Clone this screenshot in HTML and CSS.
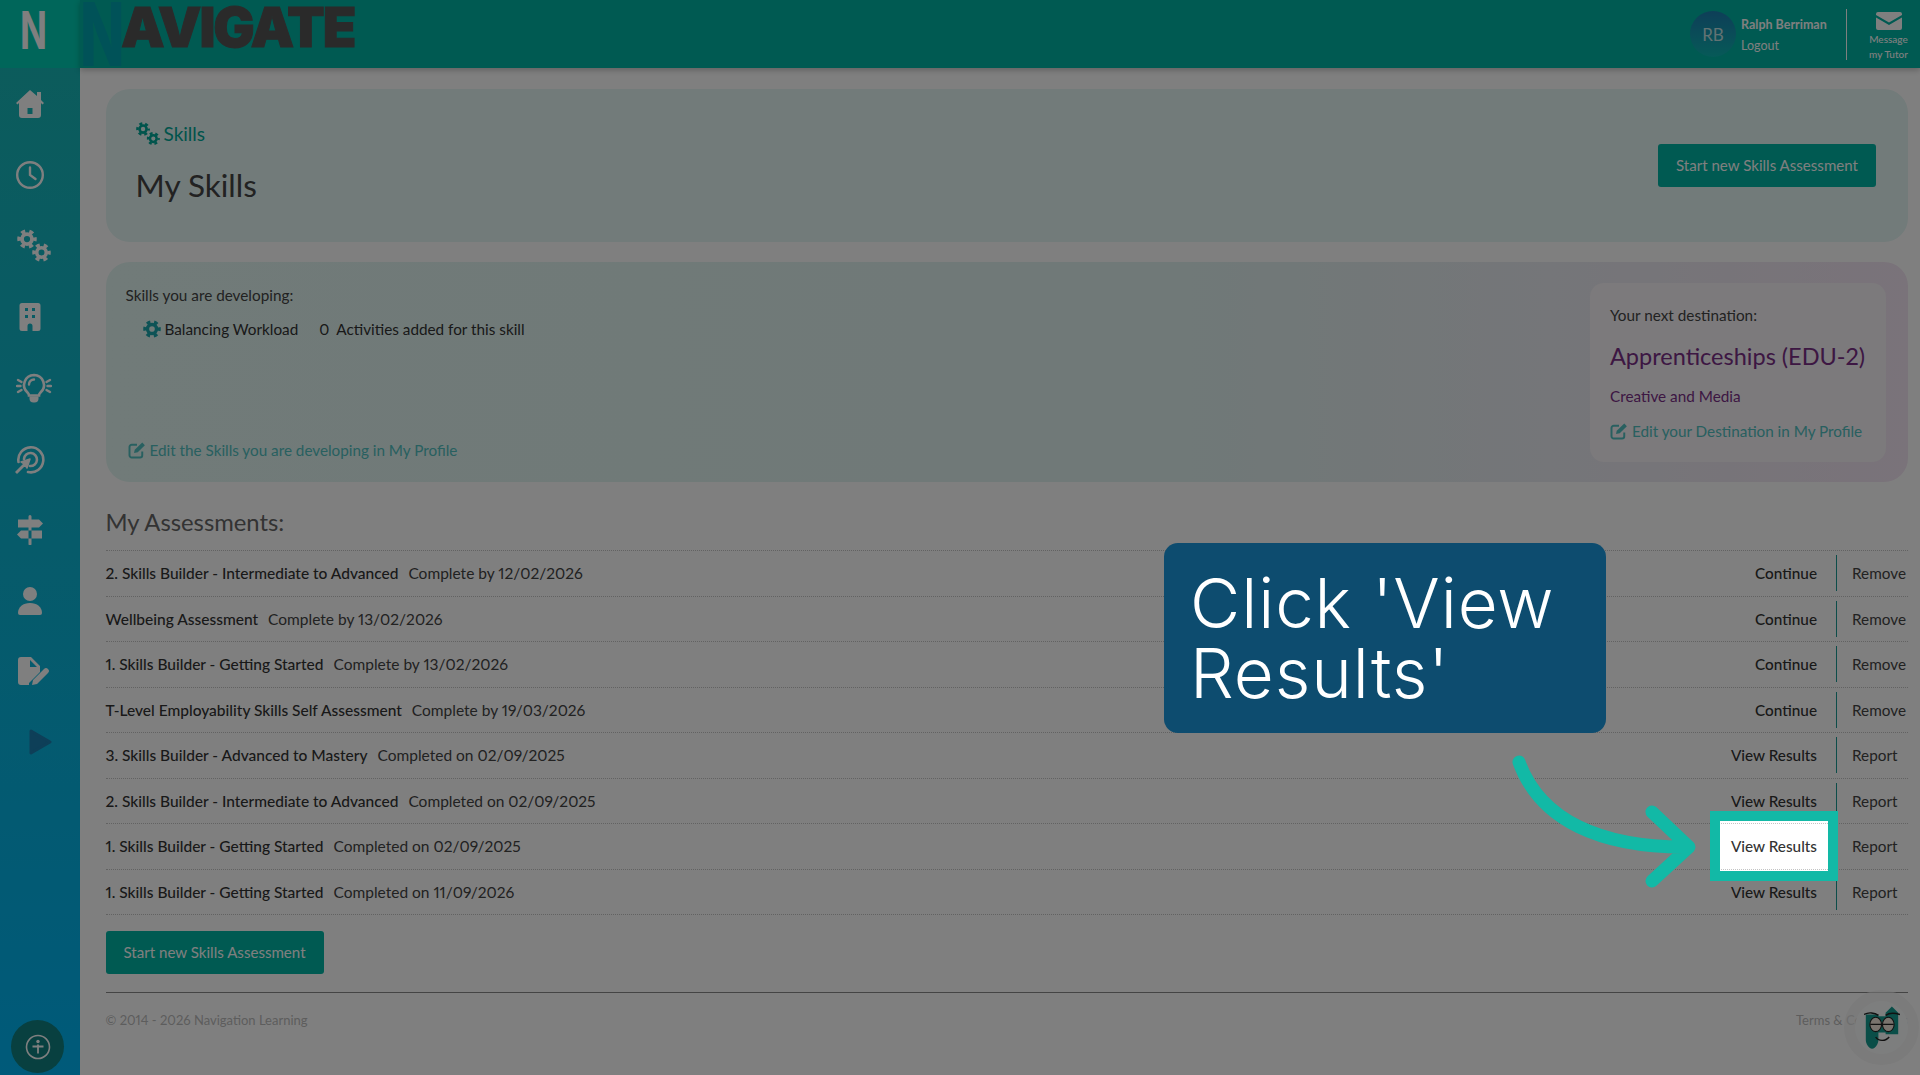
FILE: index.html
```html
<!DOCTYPE html>
<html>
<head>
    <title>My Skills</title>
    <link rel="stylesheet" href="styles.css">
</head>
<body>
<svg class="icon-defs" width="0" height="0">
    <symbol id="gear" viewBox="0 0 24 24">
        <circle cx="12" cy="12" r="6" fill="none" stroke="currentColor" stroke-width="4.5"/>
        <circle cx="12" cy="12" r="9.5" fill="none" stroke="currentColor" stroke-width="4.4" stroke-dasharray="5 4.950" stroke-dashoffset="2.500"/>
    </symbol>
    <symbol id="gears" viewBox="0 0 34 34">
        <use href="#gear" x="0" y="0" width="20" height="20"/>
        <use href="#gear" x="15" y="14" width="19" height="19"/>
    </symbol>
    <symbol id="edit" viewBox="0 0 24 24">
        <path d="M19 14v5a3 3 0 0 1-3 3H5a3 3 0 0 1-3-3V8a3 3 0 0 1 3-3h7" fill="none" stroke="currentColor" stroke-width="2.6"/>
        <path d="M8 16l1-4.500L19 2l3.500 3.500L13 15z" fill="currentColor"/>
    </symbol>
</svg>

<!-- left navigation -->
<nav class="sidebar">
    <div class="side-logo"><span class="side-n">N</span></div>
    <div class="side-icons">
        <a class="side-item">
            <svg viewBox="0 0 28 28" width="28" height="28"><path fill-rule="evenodd" fill="currentColor" d="M14 0l7 6V2h4v8l3 3-1.500 1.500L25 13v12a3 3 0 0 1-3 3H6a3 3 0 0 1-3-3V13l-1.500 1.500L0 13zM11.500 18v6h5v-6z"/></svg>
        </a>
        <a class="side-item">
            <svg viewBox="0 0 28 28" width="28" height="28"><circle cx="14" cy="14" r="12.800" fill="none" stroke="currentColor" stroke-width="2.400"/><path d="M14 6.500V14l5.500 4" fill="none" stroke="currentColor" stroke-width="2.400" stroke-linecap="round"/></svg>
        </a>
        <a class="side-item side-shift">
            <svg width="34" height="34"><use href="#gears"/></svg>
        </a>
        <a class="side-item">
            <svg viewBox="0 0 22 28" width="22" height="28"><path fill-rule="evenodd" fill="currentColor" d="M3 0h16a2.500 2.500 0 0 1 2.500 2.500v23A2.500 2.500 0 0 1 19 28H3a2.500 2.500 0 0 1-2.500-2.500v-23A2.500 2.500 0 0 1 3 0zM6 5v3h3V5zM13 5v3h3V5zM6 12v3h3v-3zM13 12v3h3v-3zM8.500 28h5v-5a2.500 2.500 0 0 0-5 0z"/></svg>
        </a>
        <a class="side-item side-shift">
            <svg viewBox="0 0 36 30" width="36" height="30"><path d="M18 2a10 10 0 0 0-6.500 17.500c1 1 1.500 2 1.500 3h10c0-1 .5-2 1.500-3A10 10 0 0 0 18 2z" fill="none" stroke="currentColor" stroke-width="2.600"/><path d="M13.500 23.500h9v2a4 4 0 0 1-4 4h-1a4 4 0 0 1-4-4z" fill="currentColor"/><path d="M18 6.500a5 5 0 0 0-5 5M2 7l3.500 2M2 19l3.500-2M1 13h3.500M34 7l-3.500 2M34 19l-3.500-2M35 13h-3.500" fill="none" stroke="currentColor" stroke-width="2.400" stroke-linecap="round"/></svg>
        </a>
        <a class="side-item">
            <svg viewBox="0 0 30 30" width="30" height="30"><path d="M3.500 18A12.500 12.500 0 1 1 13 28" fill="none" stroke="currentColor" stroke-width="2.600" stroke-linecap="round"/><path d="M9 15a6.500 6.500 0 1 1 6 7" fill="none" stroke="currentColor" stroke-width="2.600" stroke-linecap="round"/><path d="M1 28l8-8-3-2 9-3-3 9-2-3-8 8z" fill="currentColor" stroke="currentColor" stroke-width="1.500" stroke-linejoin="round"/></svg>
        </a>
        <a class="side-item">
            <svg viewBox="0 0 28 30" width="28" height="30"><path fill="currentColor" d="M12.500 1.500a1.500 1.500 0 0 1 3 0V29a1.500 1.500 0 0 1-3 0zM2 4.500h21l4 4-4 4H2zM26 15.500H5l-4 4 4 4h21z"/></svg>
        </a>
        <a class="side-item">
            <svg viewBox="0 0 24 28" width="24" height="28"><circle cx="12" cy="7" r="7" fill="currentColor"/><path d="M0 26c0-6 5-10 12-10s12 4 12 10a2 2 0 0 1-2 2H2a2 2 0 0 1-2-2z" fill="currentColor"/></svg>
        </a>
        <a class="side-item side-shift">
            <svg viewBox="0 0 32 30" width="32" height="30"><path fill-rule="evenodd" fill="currentColor" d="M3 0h10l9 9v6L11 26v2H3a3 3 0 0 1-3-3V3a3 3 0 0 1 3-3zM12 3v7h7z"/><path d="M14 28l1-5 11-11a2.800 2.800 0 0 1 4 4L19 27z" fill="currentColor"/></svg>
        </a>
        <a class="side-item side-play">
            <svg viewBox="0 0 24 26" width="24" height="26"><path d="M3 2l19 11L3 24z" fill="currentColor" stroke="currentColor" stroke-width="3" stroke-linejoin="round"/></svg>
        </a>
    </div>
    <div class="side-bottom">
        <div class="access-btn">
            <svg viewBox="0 0 26 26" width="26" height="26"><circle cx="13" cy="13" r="11.500" fill="none" stroke="currentColor" stroke-width="1.600"/><circle cx="13" cy="7.500" r="1.700" fill="currentColor"/><path d="M7.500 12.500h11M13 10.500v9" stroke="currentColor" stroke-width="1.800"/></svg>
        </div>
    </div>
</nav>

<div class="main">
    <header class="topbar">
        <div class="brand"><span class="brand-n">N</span><span class="brand-rest">AVIGATE</span></div>
        <div class="user-area">
            <div class="avatar">RB</div>
            <div class="user-text">
                <div class="user-name">Ralph Berriman</div>
                <div class="user-logout">Logout</div>
            </div>
            <div class="msg-tutor">
                <svg viewBox="0 0 26 18" width="26" height="18"><path d="M2 0h22a2 2 0 0 1 2 2v1L13 10.500 0 3V2a2 2 0 0 1 2-2zM0 5.500l13 7.500 13-7.500V16a2 2 0 0 1-2 2H2a2 2 0 0 1-2-2z" fill="currentColor"/></svg>
                <div class="msg-label">Message</div>
                <div class="msg-label">my Tutor</div>
            </div>
        </div>
    </header>

    <div class="content">
        <section class="card title-card">
            <div class="title-block">
                <div class="crumb">
                    <svg width="24" height="24"><use href="#gears"/></svg>
                    <span>Skills</span>
                </div>
                <h1 class="page-title">My Skills</h1>
            </div>
            <a class="btn">Start new Skills Assessment</a>
        </section>

        <section class="card info-card">
            <div class="developing">
                <div class="label">Skills you are developing:</div>
                <div class="skill-line">
                    <svg class="skill-gear" width="18" height="18"><use href="#gear"/></svg>
                    <span>Balancing Workload</span>
                    <span class="skill-count">0</span>
                    <span>Activities added for this skill</span>
                </div>
                <a class="edit-link edit-bottom"><svg width="18" height="18"><use href="#edit"/></svg>Edit the Skills you are developing in My Profile</a>
            </div>
            <div class="destination">
                <div class="label">Your next destination:</div>
                <div class="dest-name">Apprenticeships (EDU-2)</div>
                <div class="dest-sector">Creative and Media</div>
                <a class="edit-link"><svg width="18" height="18"><use href="#edit"/></svg>Edit your Destination in My Profile</a>
            </div>
        </section>

        <h2 class="section-title">My Assessments:</h2>
        <div class="assess-list">
            <div class="assess-row">
                <div><b>2. Skills Builder - Intermediate to Advanced</b><span>Complete by 12/02/2026</span></div>
                <div class="assess-actions"><a class="act-main">Continue</a><a class="act-side">Remove</a></div>
            </div>
            <div class="assess-row">
                <div><b>Wellbeing Assessment</b><span>Complete by 13/02/2026</span></div>
                <div class="assess-actions"><a class="act-main">Continue</a><a class="act-side">Remove</a></div>
            </div>
            <div class="assess-row">
                <div><b>1. Skills Builder - Getting Started</b><span>Complete by 13/02/2026</span></div>
                <div class="assess-actions"><a class="act-main">Continue</a><a class="act-side">Remove</a></div>
            </div>
            <div class="assess-row">
                <div><b>T-Level Employability Skills Self Assessment</b><span>Complete by 19/03/2026</span></div>
                <div class="assess-actions"><a class="act-main">Continue</a><a class="act-side">Remove</a></div>
            </div>
            <div class="assess-row">
                <div><b>3. Skills Builder - Advanced to Mastery</b><span>Completed on 02/09/2025</span></div>
                <div class="assess-actions"><a class="act-main">View Results</a><a class="act-side">Report</a></div>
            </div>
            <div class="assess-row">
                <div><b>2. Skills Builder - Intermediate to Advanced</b><span>Completed on 02/09/2025</span></div>
                <div class="assess-actions"><a class="act-main">View Results</a><a class="act-side">Report</a></div>
            </div>
            <div class="assess-row">
                <div><b>1. Skills Builder - Getting Started</b><span>Completed on 02/09/2025</span></div>
                <div class="assess-actions"><a class="act-main">View Results</a><a class="act-side">Report</a></div>
            </div>
            <div class="assess-row">
                <div><b>1. Skills Builder - Getting Started</b><span>Completed on 11/09/2026</span></div>
                <div class="assess-actions"><a class="act-main">View Results</a><a class="act-side">Report</a></div>
            </div>
        </div>
        <a class="btn btn-bottom">Start new Skills Assessment</a>

        <footer class="page-footer">
            <span>© 2014 - 2026 Navigation Learning</span>
            <span class="terms">Terms &amp; Conditions</span>
        </footer>
    </div>
</div>

<!-- chat helper -->
<div class="helper">
    <svg viewBox="0 0 40 50" width="36" height="46">
        <path d="M2 10h14v28c0 4-3 10-7 10s-7-6-7-10z" fill="#159c90"/>
        <path d="M24 8l7-7 7 7v24H24z" fill="#159c90"/>
        <rect x="14" y="12" width="12" height="18" fill="#159c90"/>
        <ellipse cx="13" cy="21" rx="6.500" ry="8" fill="#f2e6da" stroke="#222" stroke-width="1.200"/>
        <ellipse cx="27" cy="21" rx="6.500" ry="8" fill="#f2e6da" stroke="#222" stroke-width="1.200"/>
        <path d="M7 21h12M21 21h12M0 10c5-3 12-2 16 1M24 11c4-3 10-3 16-1M13 35c3 5 11 5 15 0" fill="none" stroke="#222" stroke-width="1.600"/>
    </svg>
</div>

<!-- tutorial layer -->
<div class="spotlight"></div>
<svg class="guide-arrow" viewBox="0 0 190 140" width="190" height="140">
    <path d="M9 12C30 70 90 98 179 97M142 62l37 35-37 34" fill="none" stroke="#12b9a6" stroke-width="13" stroke-linecap="round" stroke-linejoin="round"/>
</svg>
<div class="callout">Click 'View Results'</div>
</body>
</html>
```

FILE: styles.css
```css
* {
    box-sizing: border-box;
}
body {
    margin: 0;
    height: 1075px;
    overflow: hidden;
    display: flex;
    background: #fff;
    font-family: Lato, "Liberation Sans", sans-serif;
    font-size: 16px;
    font-variant-numeric: proportional-nums;
    color: #444;
}
.icon-defs {
    position: absolute;
}
a {
    color: inherit;
}

/* sidebar */
.sidebar {
    width: 80px;
    height: 1075px;
    flex: none;
    display: flex;
    flex-direction: column;
    background: linear-gradient(180deg, #1ab8b4 0%, #00b4f4 100%);
    color: #fff;
}
.side-logo {
    height: 68px;
    background: #00cdb4;
    padding: 2px 0 0 20px;
}
.side-n {
    display: inline-block;
    font-family: Inter, sans-serif;
    font-size: 52px;
    font-weight: 700;
    line-height: 58px;
    transform: scaleX(.68);
    transform-origin: left center;
}
.side-icons {
    padding-top: 1px;
}
.side-item {
    height: 70.900px;
    width: 60px;
    display: flex;
    align-items: center;
    justify-content: center;
}
.side-shift {
    padding-left: 7px;
}
.side-play {
    color: #1c7eb0;
    padding-left: 20px;
}
.side-bottom {
    margin-top: auto;
    padding: 0 0 2px 11px;
}
.access-btn {
    width: 53px;
    height: 53px;
    border-radius: 50%;
    background: #108080;
    display: flex;
    align-items: center;
    justify-content: center;
}

/* top bar */
.main {
    flex: 1;
    min-width: 0;
}
.topbar {
    height: 68px;
    background: #00b4a4;
    box-shadow: 0 2px 6px rgba(0, 0, 0, .25);
    display: flex;
    justify-content: space-between;
    position: relative;
}
.brand {
    display: flex;
    height: 68px;
    align-items: flex-start;
}
.brand-n {
    display: inline-block;
    font-family: Inter, sans-serif;
    font-weight: 800;
    font-size: 88px;
    line-height: 68px;
    color: #00a4b0;
    width: 41px;
    transform: scaleX(.66);
    transform-origin: left center;
}
.brand-rest {
    font-family: Inter, sans-serif;
    font-weight: 900;
    font-size: 55px;
    line-height: 55px;
    letter-spacing: -2.100px;
    color: #555;
    -webkit-text-stroke: 1px #555;
}
.user-area {
    display: flex;
    align-items: center;
    color: #fff;
}
.avatar {
    width: 46px;
    height: 46px;
    border-radius: 50%;
    background: linear-gradient(180deg, #1c7eb0, #0db4b0);
    color: #c4e4e6;
    display: flex;
    align-items: center;
    justify-content: center;
    font-size: 17px;
    margin-right: 5px;
}
.user-text {
    width: 106px;
    height: 51px;
    border-right: 1px solid #fff;
    font-size: 12.500px;
    line-height: 21px;
    padding-top: 5px;
}
.user-name {
    font-weight: 700;
}
.msg-tutor {
    width: 73px;
    text-align: center;
    font-size: 10px;
    line-height: 15px;
    padding-top: 5px;
    padding-left: 10px;
}
.msg-tutor svg {
    display: block;
    margin: 0 auto 2px;
}
.msg-label {
    font-weight: 500;
}

/* cards */
.content {
    padding: 21px 12px 0 25.5px;
}
.card {
    border-radius: 24px;
    background: #e4f6f4;
}
.title-card {
    height: 153px;
    display: flex;
    justify-content: space-between;
    align-items: center;
    padding: 0 32px 0 30px;
}
.title-block {
    align-self: flex-start;
    padding-top: 33px;
}
.crumb {
    display: flex;
    align-items: center;
    gap: 4px;
    color: #00a898;
    font-size: 19px;
    line-height: 24px;
}
.page-title {
    margin: 20px 0 0;
    font-size: 31.500px;
    font-weight: 400;
    line-height: 38px;
    color: #444;
}
.btn {
    display: inline-block;
    height: 43px;
    line-height: 43px;
    padding: 0 18px;
    background: #00b4a4;
    color: #fff;
    border-radius: 3px;
    font-size: 15.100px;
    white-space: nowrap;
}
.info-card {
    height: 220px;
    margin-top: 20px;
    display: flex;
    justify-content: space-between;
    padding: 21px 22px 21px 21px;
    background: linear-gradient(90deg, #e2f6f2 0%, #e0f2f0 60%, #f4e6f4 100%);
}
.developing {
    display: flex;
    flex-direction: column;
    flex: 1;
    margin-left: -1px;
    padding-top: 1px;
}
.label {
    font-size: 15.300px;
    line-height: 22px;
    color: #444;
}
.skill-line {
    display: flex;
    align-items: center;
    margin-top: 12px;
    padding-left: 17px;
    line-height: 22px;
    font-size: 15.300px;
    color: #333;
}
.skill-gear {
    color: #1ca6ac;
    margin-right: 4px;
}
.skill-count {
    margin: 0 7px 0 21px;
}
.edit-link {
    display: flex;
    align-items: center;
    gap: 4px;
    color: #50c0c0;
    font-size: 15.250px;
    line-height: 22px;
}
.edit-bottom {
    margin-top: auto;
    margin-left: 2px;
}
.destination {
    width: 296px;
    height: 179px;
    flex: none;
    background: #f8f4f8;
    border-radius: 14px;
    padding: 21px 20px;
}
.dest-name {
    font-size: 23.500px;
    line-height: 32px;
    color: #7a2e86;
    margin-top: 14px;
    white-space: nowrap;
}
.dest-sector {
    color: #7a2e86;
    font-size: 15.300px;
    line-height: 22px;
    margin-top: 13px;
}
.destination .edit-link {
    margin-top: 13px;
    white-space: nowrap;
}

/* assessment list */
.section-title {
    margin: 24px 0 12px;
    font-size: 23.800px;
    line-height: 32px;
    font-weight: 400;
    color: #666;
}
.assess-list {
    border-bottom: 1px dotted #c4c4c4;
}
.assess-row {
    height: 45.500px;
    border-top: 1px dotted #c4c4c4;
    display: flex;
    justify-content: space-between;
    align-items: center;
    font-size: 15.500px;
    color: #444;
}
.assess-row b {
    font-weight: 500;
    color: #333;
    margin-right: 10px;
}
.assess-actions {
    display: flex;
    align-items: center;
    height: 36px;
    font-size: 15.300px;
    font-weight: 500;
    color: #333;
}
.act-side {
    width: 72px;
    height: 36px;
    line-height: 36px;
    padding-left: 15px;
    border-left: 1px solid #1a9a94;
    font-weight: 400;
    color: #444;
}
.act-main {
    padding-right: 19px;
}
.btn-bottom {
    margin-top: 16px;
}

.page-footer {
    margin-top: 18px;
    border-top: 1px solid #888;
    padding-top: 18px;
    display: flex;
    justify-content: space-between;
    font-size: 13px;
    line-height: 18px;
    color: #bbb;
}
.terms {
    width: 112px;
    white-space: nowrap;
}

/* things lying over the page */
.helper {
    position: absolute;
    left: 1855px;
    top: 1001px;
    width: 53px;
    height: 53px;
    border-radius: 50%;
    background: #fbfdfd;
    box-shadow: 0 0 0 11px rgba(240, 240, 240, .6);
    display: flex;
    align-items: center;
    justify-content: center;
}
.spotlight {
    position: absolute;
    left: 1710px;
    top: 811px;
    width: 128px;
    height: 70px;
    border: 10px solid #12b9a6;
    box-shadow: 0 0 0 3000px rgba(0, 0, 0, .5);
}
.guide-arrow {
    position: absolute;
    left: 1510px;
    top: 750px;
}
.callout {
    position: absolute;
    left: 1164px;
    top: 543px;
    width: 442px;
    height: 190px;
    padding: 25px 26px;
    border-radius: 14px;
    background: #0d4c6f;
    color: #fff;
    font-family: Inter, sans-serif;
    font-size: 69px;
    font-weight: 350;
    line-height: 70px;
    letter-spacing: .9px;
}
```
